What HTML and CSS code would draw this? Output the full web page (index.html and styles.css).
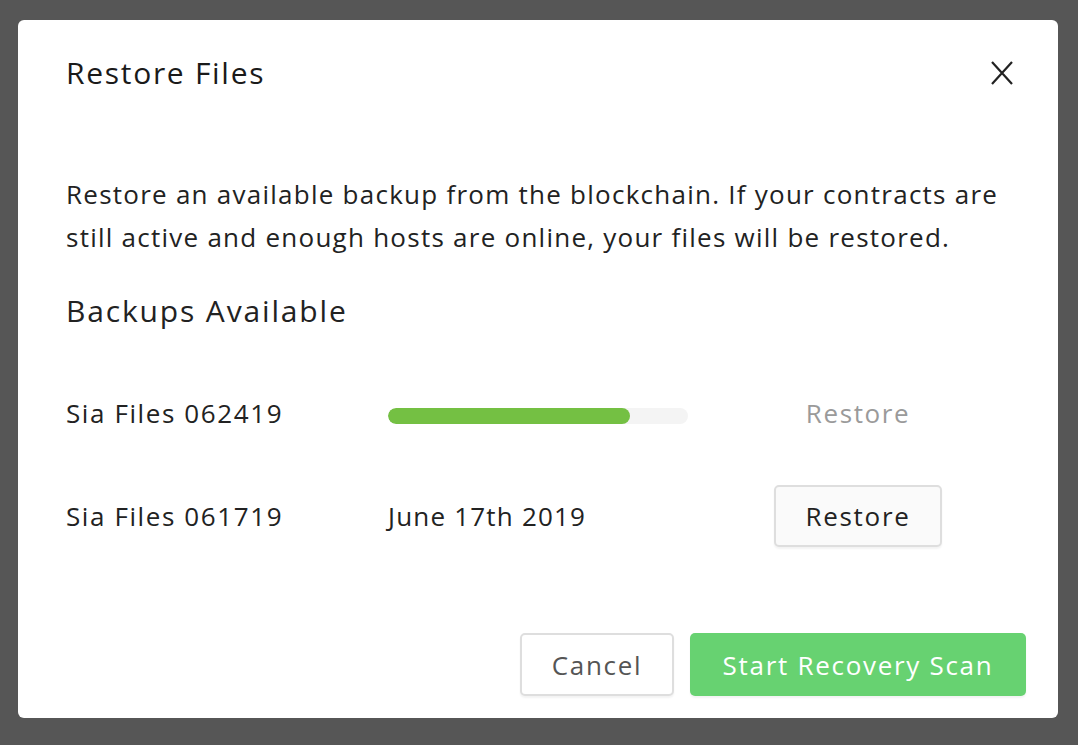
FILE: index.html
```html
<!DOCTYPE html>
<html lang="en">
<head>
  <meta charset="UTF-8">
  <title>Restore Files</title>
  <link rel="stylesheet" href="styles.css">
</head>
<body>

  <div class="modal">
    <!-- Header -->
    <div class="modal-header">
      <h1>Restore Files</h1>
      <button class="close-btn" aria-label="Close">
        <svg width="24" height="24" viewBox="0 0 24 24">
          <path d="M2 1 L22 23 M22 1 L2 23" stroke="#222" stroke-width="2.2" fill="none"/>
        </svg>
      </button>
    </div>

    <p class="intro">Restore an available backup from the blockchain. If your contracts are still active and enough hosts are online, your files will be restored.</p>

    <h2>Backups Available</h2>

    <!-- Backup list -->
    <div class="backup-list">
      <div class="backup-row">
        <span class="backup-name">Sia Files 062419</span>
        <div class="progress"><div class="progress-fill" style="width: 80.7%"></div></div>
        <span class="restore-pending">Restore</span>
      </div>
      <div class="backup-row">
        <span class="backup-name">Sia Files 061719</span>
        <span class="backup-date">June 17th 2019</span>
        <button class="btn btn-light">Restore</button>
      </div>
    </div>

    <!-- Footer -->
    <div class="modal-footer">
      <button class="btn btn-cancel">Cancel</button>
      <button class="btn btn-green">Start Recovery Scan</button>
    </div>
  </div>

</body>
</html>
```

FILE: styles.css
```css
body {
  margin: 0;
  height: 745px;
  background-color: #565656;
  font-family: "Open Sans", Lato, sans-serif;
  color: #222;
  overflow: hidden;
}

.modal {
  margin: 20px 20px 0 18px;
  width: 1040px;
  height: 698px;
  box-sizing: border-box;
  background-color: #ffffff;
  border-radius: 6px;
  padding: 0 32px 0 48px;
}

.modal-header {
  display: flex;
  justify-content: space-between;
  align-items: center;
  padding-top: 33px;
  height: 40px;
}

h1 {
  margin: 0;
  font-size: 30px;
  font-weight: normal;
  line-height: 40px;
  color: #1a1a1a;
  letter-spacing: 1.7px;
}

.close-btn {
  background: none;
  border: none;
  padding: 0;
  margin-right: 12px;
  width: 24px;
  height: 24px;
  cursor: pointer;
}

.close-btn svg {
  display: block;
}

.intro {
  margin: 80px 0 0 0;
  font-size: 26px;
  line-height: 43px;
  letter-spacing: 1.25px;
}

h2 {
  margin: 32px 0 0 0;
  font-size: 30px;
  font-weight: normal;
  line-height: 40px;
  letter-spacing: 1.85px;
}

.backup-list {
  margin-top: 51px;
  display: flex;
  flex-direction: column;
  gap: 41px;
}

.backup-row {
  display: grid;
  grid-template-columns: 322px 386px 168px;
  align-items: center;
  height: 62px;
  font-size: 26px;
  letter-spacing: 1.6px;
}

.backup-date {
  letter-spacing: 1.2px;
}

.progress {
  margin-top: 6px;
  width: 300px;
  height: 16px;
  background-color: #f4f4f4;
  border-radius: 8px;
  overflow: hidden;
}

.progress-fill {
  height: 100%;
  background-color: #74c043;
  border-radius: 8px;
}

.restore-pending {
  text-align: center;
  color: #9a9a9a;
}

.btn {
  font-family: inherit;
  font-size: 26px;
  letter-spacing: 1.7px;
  height: 63px;
  padding: 0;
  border-radius: 5px;
  cursor: pointer;
}

.btn-light {
  height: 62px;
  background-color: #fafafa;
  border: 2px solid #dedede;
  color: #222;
  box-shadow: 0 2px 2px rgba(0, 0, 0, 0.05);
}

.modal-footer {
  margin-top: 86px;
  display: flex;
  justify-content: flex-end;
  gap: 16px;
}

.btn-cancel {
  width: 154px;
  background-color: #ffffff;
  border: 2px solid #dedede;
  color: #555;
  box-shadow: 0 2px 2px rgba(0, 0, 0, 0.05);
}

.btn-green {
  width: 336px;
  background-color: #67d271;
  border: none;
  color: #ffffff;
  box-shadow: 0 2px 2px rgba(0, 0, 0, 0.05);
}
```
